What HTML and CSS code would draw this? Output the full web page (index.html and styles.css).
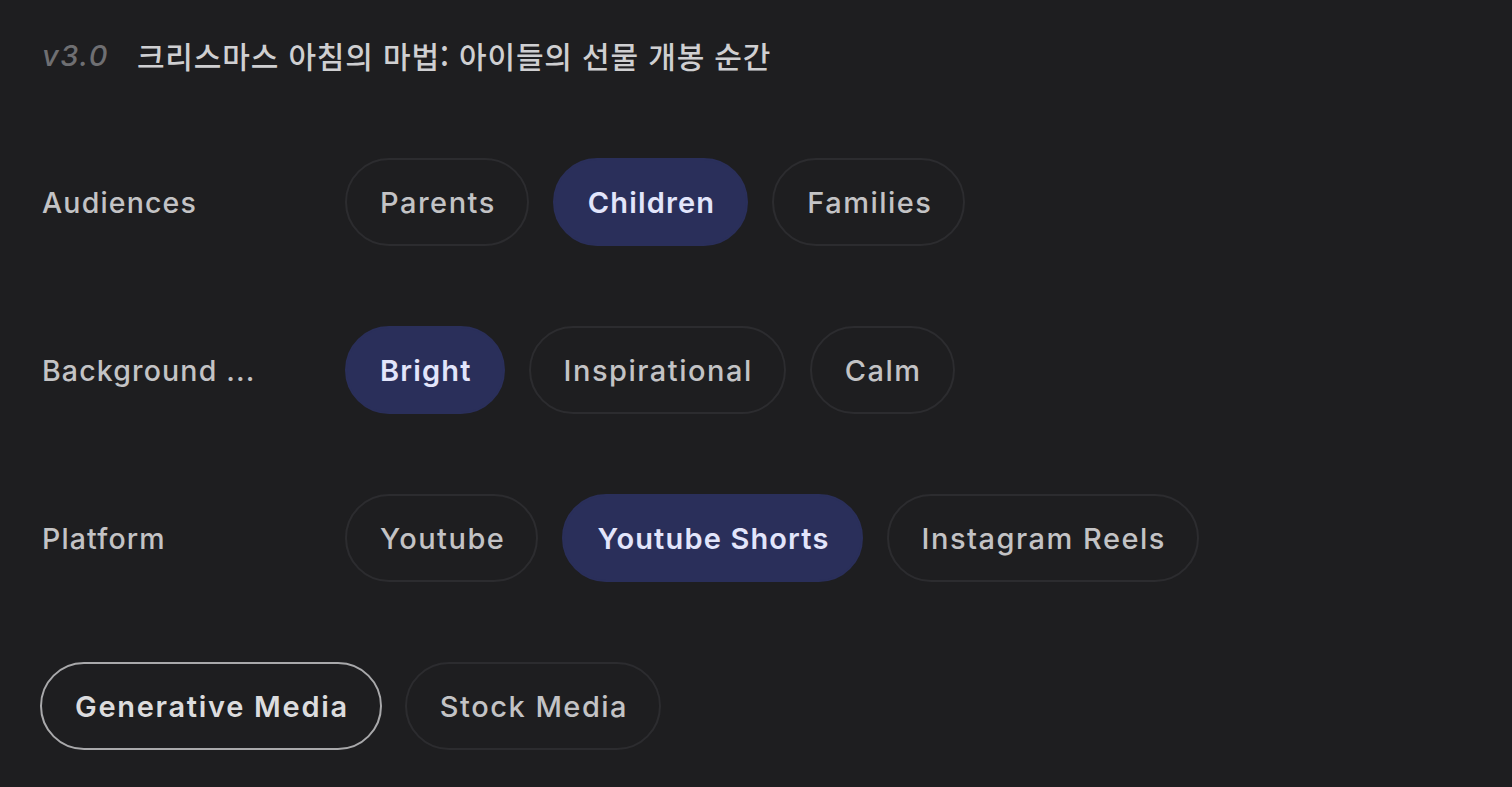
FILE: index.html
```html
<!DOCTYPE html>
<html lang="ko">
<head>
<meta charset="utf-8">
<link rel="stylesheet" href="styles.css">
</head>
<body>
<div class="panel">
  <header class="title">
    <span class="version">v3.0</span>
    <span class="name">크리스마스 아침의 마법: 아이들의 선물 개봉 순간</span>
  </header>
  <div class="rows">
    <div class="row">
      <div class="label">Audiences</div>
      <div class="chips">
        <span class="chip">Parents</span>
        <span class="chip selected">Children</span>
        <span class="chip">Families</span>
      </div>
    </div>
    <div class="row">
      <div class="label">Background ...</div>
      <div class="chips">
        <span class="chip selected">Bright</span>
        <span class="chip">Inspirational</span>
        <span class="chip">Calm</span>
      </div>
    </div>
    <div class="row">
      <div class="label">Platform</div>
      <div class="chips">
        <span class="chip">Youtube</span>
        <span class="chip selected">Youtube Shorts</span>
        <span class="chip">Instagram Reels</span>
      </div>
    </div>
    <div class="row media">
      <span class="chip active">Generative Media</span>
      <span class="chip">Stock Media</span>
    </div>
  </div>
</div>
</body>
</html>
```
FILE: styles.css
```css
html, body {
  margin: 0;
  padding: 0;
  background: #1e1e20;
  height: 100%;
}
body {
  font-family: Inter, "Noto Sans", sans-serif;
  color: #c9c9cb;
}
.panel {
  padding: 34px 40px 0 40px;
}
.title {
  display: flex;
  align-items: center;
  gap: 28px;
  height: 42px;
  padding-left: 2px;
}
.version {
  font-style: italic;
  font-size: 29px;
  font-weight: 500;
  color: #6f6f72;
  letter-spacing: 1.5px;
}
.name {
  font-family: "Noto Sans CJK KR", sans-serif;
  font-size: 30px;
  font-weight: 500;
  color: #cfcfd1;
  letter-spacing: 0.85px;
}
.rows {
  display: flex;
  flex-direction: column;
  gap: 80px;
  margin-top: 82px;
}
.row {
  display: flex;
  align-items: center;
  height: 88px;
}
.label {
  width: 303px;
  padding-left: 2px;
  font-size: 28.5px;
  font-weight: 500;
  color: #c3c3c5;
  letter-spacing: 1.15px;
}
.chips {
  display: flex;
  gap: 24px;
}
.media {
  gap: 23px;
}
.chip {
  display: inline-flex;
  align-items: center;
  box-sizing: border-box;
  height: 88px;
  padding: 0 31px 0 33px;
  border: 2px solid #2c2c2f;
  border-radius: 44px;
  font-size: 29px;
  font-weight: 500;
  color: #c3c3c5;
  letter-spacing: 1.5px;
  white-space: nowrap;
}
.chip.selected {
  background: #2a2f5a;
  border-color: #2a2f5a;
  color: #e2e5fb;
  font-weight: 600;
  letter-spacing: 1.15px;
}
.chip.active {
  border-color: #a9a9ab;
  color: #dcdcde;
  font-weight: 600;
  letter-spacing: 1.7px;
}
```
